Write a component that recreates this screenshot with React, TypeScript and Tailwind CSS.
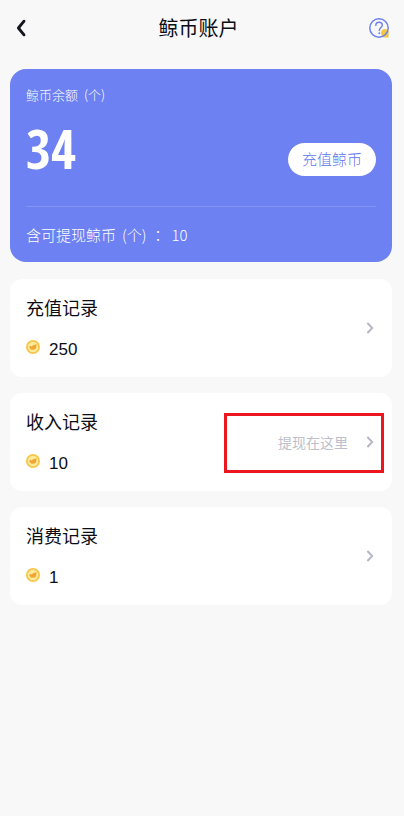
type RecordItem = {
  id: string
  title: string
  amount: number
  note?: string
}

const RECORDS: RecordItem[] = [
  { id: 'recharge', title: '充值记录', amount: 250 },
  { id: 'income', title: '收入记录', amount: 10, note: '提现在这里' },
  { id: 'spend', title: '消费记录', amount: 1 },
]

function BackIcon() {
  return (
    <svg viewBox="2 2 16 20" className="h-5 w-4" fill="none" aria-hidden>
      <path
        d="M14 5.2 L8.4 12 L14 18.8"
        stroke="#15171f"
        strokeWidth="2.9"
        strokeLinecap="round"
        strokeLinejoin="round"
      />
    </svg>
  )
}

function HelpIcon() {
  return (
    <svg viewBox="0 0 20 20" className="h-5 w-5" fill="none" aria-hidden>
      <path
        d="M12 14.8 C12 12.7 13.7 11.1 15.8 11.1 C17.3 11.1 18.7 11.8 19.6 13 V19.4 H14.6 C13 18.7 12 16.8 12 14.8Z"
        fill="#f3c944"
      />
      <circle cx="10" cy="10" r="9.2" stroke="#6d80ee" strokeWidth="1.5" />
      <path
        d="M6.8 7.6 C6.8 5.6 8.1 4.3 10 4.3 C11.9 4.3 13.3 5.5 13.3 7.3 C13.3 9.5 10.3 9.8 10.3 12.6"
        stroke="#6d80ee"
        strokeWidth="1.4"
        strokeLinecap="round"
      />
      <circle cx="10.3" cy="15.3" r="1" fill="#6d80ee" />
    </svg>
  )
}

function CoinIcon() {
  return (
    <svg viewBox="0 0 14 14" className="mt-[3px] h-3.5 w-3.5" fill="none" aria-hidden>
      <circle cx="7" cy="7" r="7" fill="#f9c548" />
      <circle cx="7" cy="7" r="5.2" fill="#fdeb9c" />
      <path
        d="M3.4 7.2 C3.3 6.1 4.3 5.8 5 6.3 C5.7 6.8 6.2 6 6.8 5.4 C7.5 4.8 8.4 4.6 9 4.9 C9.4 4.3 9.9 4 10.7 4.2 C10.5 4.9 10.6 5.3 10.3 5.9 C10.7 8 9.3 9.8 7 9.8 C5 9.8 3.6 8.6 3.4 7.2Z"
        fill="#f2a534"
      />
    </svg>
  )
}

function ArrowIcon() {
  return (
    <svg viewBox="0 0 8 12" className="h-3 w-2" fill="none" aria-hidden>
      <path d="M1.4 1 L6.2 6 L1.4 11" stroke="#b4b6c6" strokeWidth="1.9" />
    </svg>
  )
}

function RecordCard({ title, amount, note }: RecordItem) {
  return (
    <li className="relative">
      <a
        href="#"
        className="flex items-center justify-between rounded-xl bg-white py-3.5 pr-[18px] pl-4"
      >
        <div>
          <h2 className="text-[18px] leading-7 font-normal text-[#0c0e16]">
            {title}
          </h2>
          <div className="mt-4 flex items-start gap-[9px]">
            <CoinIcon />
            <span className="font-['Liberation_Sans',sans-serif] text-[17px] leading-[26px] text-[#0c0e16]">
              {amount}
            </span>
          </div>
        </div>
        <div className="flex items-center gap-[18px]">
          {note && <span className="text-sm text-[#bcbfcb]">{note}</span>}
          <ArrowIcon />
        </div>
      </a>
      {note && (
        <div
          className="pointer-events-none absolute top-5 right-2 h-15 w-40 border-3 border-[#ec161f]"
          aria-hidden
        />
      )}
    </li>
  )
}

export default function CoinAccountPage() {
  return (
    <div className="min-h-screen bg-[#f8f8f8] font-['Noto_Sans_CJK_SC',sans-serif]">
      <header className="flex h-14 items-center justify-between pr-[15px] pl-3">
        <button type="button" aria-label="返回">
          <BackIcon />
        </button>
        <h1 className="text-xl font-normal text-[#0c0e16]">鲸币账户</h1>
        <button type="button" aria-label="帮助">
          <HelpIcon />
        </button>
      </header>

      <main className="pt-[13px] pr-3 pl-2.5">
        <section className="rounded-2xl bg-[#6d81f2] px-4 text-white">
          <div className="flex items-end justify-between border-b border-white/15 pt-4 pb-[30px]">
            <div>
              <p className="flex gap-1.5 text-[13px] leading-5 font-light">
                <span>鲸币余额</span>
                <span>(个)</span>
              </p>
              <p className="mt-[15px] font-['Noto_Sans_ExtraCondensed','Open_Sans_Condensed','Roboto_Condensed',sans-serif] text-[54px] leading-14 font-bold">
                34
              </p>
            </div>
            <button
              type="button"
              className="h-[33px] rounded-full bg-white px-3.5 text-[15px] font-light text-[#6175ee]"
            >
              充值鲸币
            </button>
          </div>
          <p className="flex gap-1.5 py-[15px] text-[15px] leading-[25px] font-light">
            <span>含可提现鲸币</span>
            <span>
              (个)
              <span className="ml-1 font-['Noto_Sans_CJK_TC',sans-serif]" lang="zh-TW">
                ：
              </span>
            </span>
            <span>10</span>
          </p>
        </section>

        <ul className="mt-[17px] flex flex-col gap-4">
          {RECORDS.map((item) => (
            <RecordCard key={item.id} {...item} />
          ))}
        </ul>
      </main>
    </div>
  )
}
